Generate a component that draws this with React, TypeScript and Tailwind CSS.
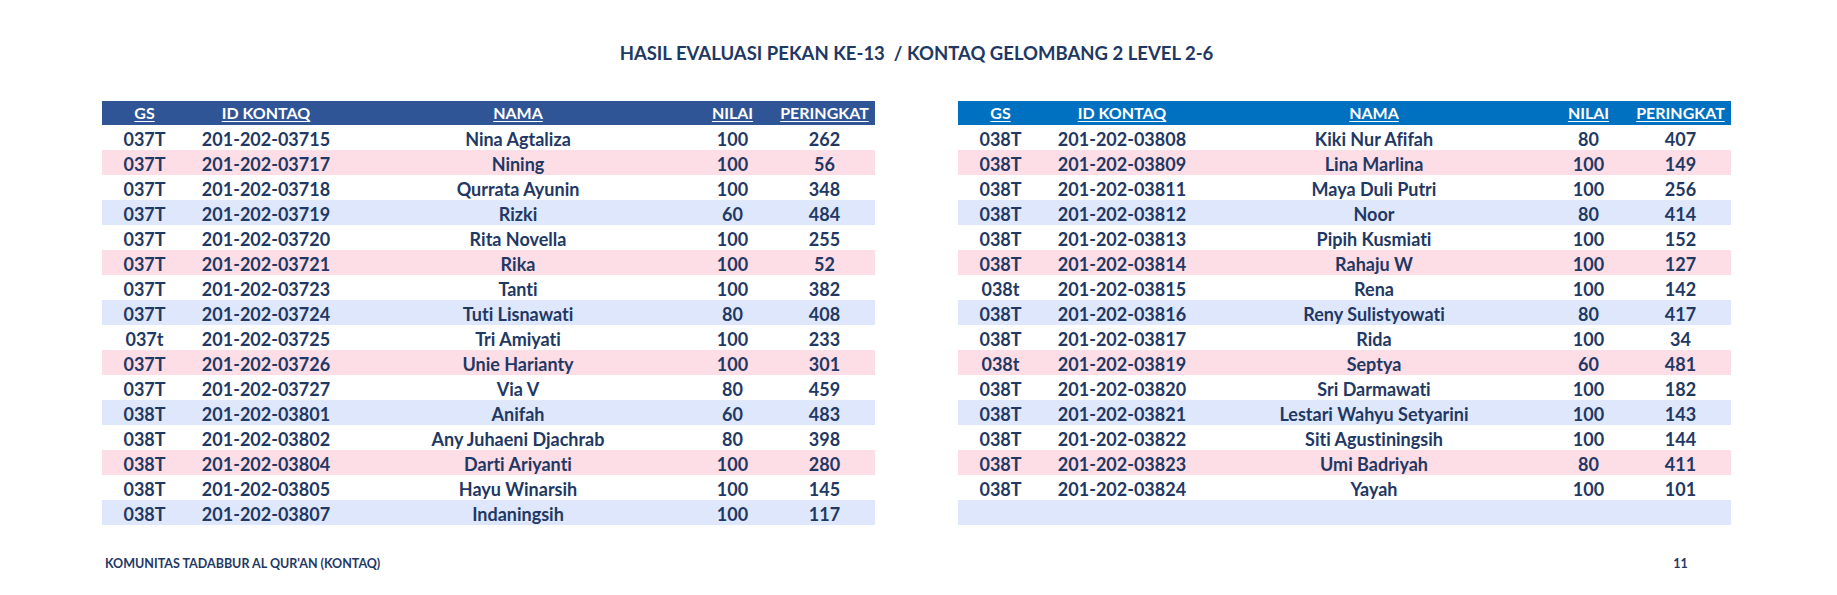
type Row = [string, string, string, string, string];

const leftRows: Row[] = [
  ["037T", "201-202-03715", "Nina Agtaliza", "100", "262"],
  ["037T", "201-202-03717", "Nining", "100", "56"],
  ["037T", "201-202-03718", "Qurrata Ayunin", "100", "348"],
  ["037T", "201-202-03719", "Rizki", "60", "484"],
  ["037T", "201-202-03720", "Rita Novella", "100", "255"],
  ["037T", "201-202-03721", "Rika", "100", "52"],
  ["037T", "201-202-03723", "Tanti", "100", "382"],
  ["037T", "201-202-03724", "Tuti Lisnawati", "80", "408"],
  ["037t", "201-202-03725", "Tri Amiyati", "100", "233"],
  ["037T", "201-202-03726", "Unie Harianty", "100", "301"],
  ["037T", "201-202-03727", "Via V", "80", "459"],
  ["038T", "201-202-03801", "Anifah", "60", "483"],
  ["038T", "201-202-03802", "Any Juhaeni Djachrab", "80", "398"],
  ["038T", "201-202-03804", "Darti Ariyanti", "100", "280"],
  ["038T", "201-202-03805", "Hayu Winarsih", "100", "145"],
  ["038T", "201-202-03807", "Indaningsih", "100", "117"],
];

const rightRows: Row[] = [
  ["038T", "201-202-03808", "Kiki Nur Afifah", "80", "407"],
  ["038T", "201-202-03809", "Lina Marlina", "100", "149"],
  ["038T", "201-202-03811", "Maya Duli Putri", "100", "256"],
  ["038T", "201-202-03812", "Noor", "80", "414"],
  ["038T", "201-202-03813", "Pipih Kusmiati", "100", "152"],
  ["038T", "201-202-03814", "Rahaju W", "100", "127"],
  ["038t", "201-202-03815", "Rena", "100", "142"],
  ["038T", "201-202-03816", "Reny Sulistyowati", "80", "417"],
  ["038T", "201-202-03817", "Rida", "100", "34"],
  ["038t", "201-202-03819", "Septya", "60", "481"],
  ["038T", "201-202-03820", "Sri Darmawati", "100", "182"],
  ["038T", "201-202-03821", "Lestari Wahyu Setyarini", "100", "143"],
  ["038T", "201-202-03822", "Siti Agustiningsih", "100", "144"],
  ["038T", "201-202-03823", "Umi Badriyah", "80", "411"],
  ["038T", "201-202-03824", "Yayah", "100", "101"],
  ["", "", "", "", ""],
];

const headers = ["GS", "ID KONTAQ", "NAMA", "NILAI", "PERINGKAT"];

// white, pink, white, blue repeating
const rowBg = ["bg-white", "bg-[#fddde6]", "bg-white", "bg-[#dee7fb]"];

function ScoreTable({ rows, headerBg }: { rows: Row[]; headerBg: string }) {
  return (
    <div className="w-[773px]">
      <div
        className={`grid grid-cols-[85px_158px_346px_83px_101px] h-[24px] text-white text-[16px] font-bold ${headerBg}`}
      >
        {headers.map((h) => (
          <div key={h} className="text-center pt-[1px] leading-[22px] whitespace-nowrap">
            <span className="underline underline-offset-2">{h}</span>
          </div>
        ))}
      </div>
      {rows.map((r, i) => (
        <div
          key={i}
          className={`grid grid-cols-[85px_158px_346px_83px_101px] h-[25px] text-[18px] font-bold text-[#1f3864] ${rowBg[i % 4]}`}
        >
          {r.map((cell, j) => (
            <div key={j} className="text-center pt-[4px] leading-[21px] whitespace-nowrap">
              {cell}
            </div>
          ))}
        </div>
      ))}
    </div>
  );
}

export default function App() {
  return (
    <div className="w-[1837px] h-[595px] bg-white font-['Lato',sans-serif] [font-variant-ligatures:none] overflow-hidden">
      <div className="ml-[102px] w-[1629px]">
        {/* Title */}
        <h1 className="pt-[42px] text-center text-[18.5px] leading-[23px] font-bold text-[#1f3864] whitespace-pre">
          HASIL EVALUASI PEKAN KE-13  / KONTAQ GELOMBANG 2 LEVEL 2-6
        </h1>

        {/* Tables */}
        <div className="mt-[36px] flex gap-[83px]">
          <ScoreTable rows={leftRows} headerBg="bg-[#2f5597]" />
          <ScoreTable rows={rightRows} headerBg="bg-[#0070c0]" />
        </div>

        {/* Footer */}
        <div className="mt-[31px] flex gap-[83px] text-[12.5px] leading-[16px] font-bold text-[#1f3864]">
          <div className="w-[773px] pl-[3px]">KOMUNITAS TADABBUR AL QUR'AN (KONTAQ)</div>
          <div className="w-[773px] flex justify-end">
            <div className="w-[101px] text-center">11</div>
          </div>
        </div>
      </div>
    </div>
  );
}
